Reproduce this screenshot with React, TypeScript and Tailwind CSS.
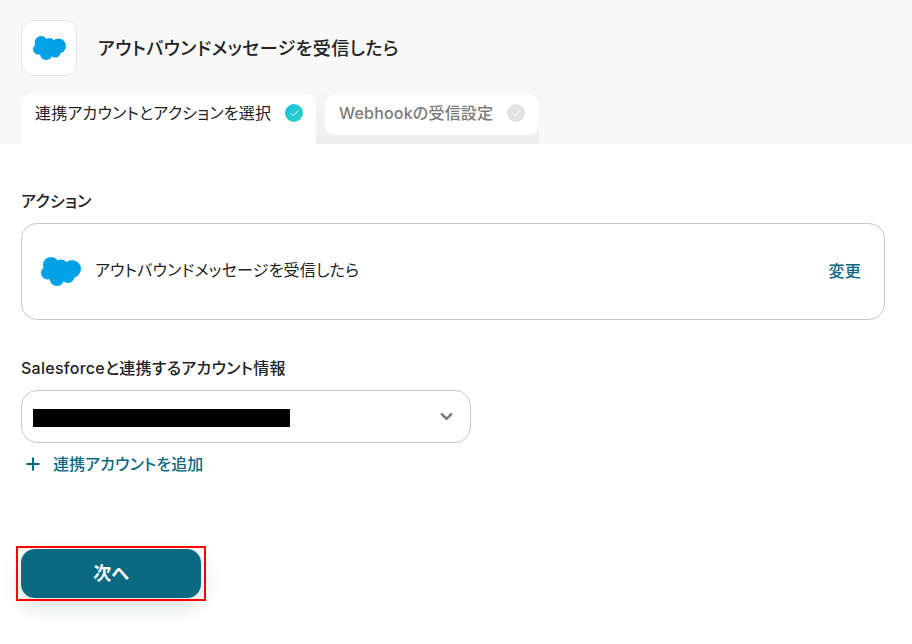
import { ChevronDown, Plus, Check } from "lucide-react";

function CloudLogo({ className }: { className: string }) {
  return (
    <svg viewBox="0 0 40 29" className={className} fill="#00a2e5">
      <circle cx="10" cy="8" r="8" />
      <circle cx="20" cy="9.5" r="7" />
      <circle cx="31" cy="12" r="9" />
      <circle cx="6.5" cy="16" r="6.5" />
      <circle cx="16" cy="21.5" r="7.5" />
      <circle cx="27" cy="19.5" r="6.5" />
      <rect x="6" y="8" width="26" height="14" />
    </svg>
  );
}

export default function App() {
  return (
    <div className="min-h-[644px] w-[912px] overflow-hidden bg-white font-['Inter','Noto_Sans_CJK_JP',sans-serif] text-[#222222] [font-feature-settings:'palt']">
      <div className="h-[144px] overflow-hidden bg-[#f8f8f8] pl-[21px] pt-[20px]">
        <div className="flex items-center gap-[21px]">
          <div className="flex h-[56px] w-[56px] items-center justify-center rounded-[12px] border border-[#e6e6e6] bg-white">
            <CloudLogo className="h-[24px] w-[33px]" />
          </div>
          <h1 className="text-[18px] font-medium tracking-[0.45px]">アウトバウンドメッセージを受信したら</h1>
        </div>
        <div className="mt-[18px] flex items-start">
          <div className="flex h-[50px] w-[295px] items-start gap-[14px] rounded-t-[10px] bg-white pl-[14px] pt-[7px]">
            <span className="whitespace-nowrap text-[16px] font-normal leading-[24px] tracking-[0.2px]">連携アカウントとアクションを選択</span>
            <span className="mt-[3px] flex h-[18px] w-[18px] items-center justify-center rounded-full bg-gradient-to-br from-[#1dbfe0] to-[#2ad1c4]">
              <Check className="h-[11px] w-[11px] text-white" strokeWidth={2} />
            </span>
          </div>
          <div className="h-[50px] w-[223px] bg-gradient-to-b from-[#f6f6f6] to-[#eeeeee] pl-[9px]">
            <div className="flex h-[41px] w-[214px] items-start gap-[14px] rounded-[10px] bg-white pl-[14px] pt-[7px] text-[#7a7a7a]">
              <span className="whitespace-nowrap text-[16px] font-medium leading-[24px] tracking-[0.2px]">Webhookの受信設定</span>
              <span className="mt-[3px] flex h-[18px] w-[18px] items-center justify-center rounded-full bg-[#e2e2e2]">
                <Check className="h-[11px] w-[11px] text-white" strokeWidth={2} />
              </span>
            </div>
          </div>
        </div>
      </div>

      <div className="px-[21px] pt-[46px]">
        <h2 className="text-[16px] font-medium leading-[22px] tracking-[0.25px]">アクション</h2>
        <div className="mt-[11px] flex h-[97px] w-[864px] items-center justify-between rounded-[16px] border border-[#c8c8c8] pl-[19px] pr-[23px]">
          <div className="flex items-center gap-[14px]">
            <CloudLogo className="h-[29px] w-[40px]" />
            <span className="-mt-[3px] text-[16px] leading-[22px] tracking-[0.22px]">アウトバウンドメッセージを受信したら</span>
          </div>
          <span className="-mt-[1px] text-[16px] font-medium tracking-[0.25px] text-[#0b6a82]">変更</span>
        </div>

        <h2 className="mt-[37px] text-[16px] font-medium leading-[22px] tracking-[0.27px]">Salesforceと連携するアカウント情報</h2>
        <div className="mt-[11px] flex h-[53px] w-[450px] items-center justify-between rounded-[16px] border border-[#c8c8c8] pl-[11px] pr-[14px]">
          <div className="mt-[2px] h-[18px] w-[257px] bg-black" />
          <ChevronDown className="h-[19px] w-[19px] text-[#777777]" strokeWidth={3} />
        </div>
        <div className="mt-[10px] flex items-center gap-[10px] pl-[2px] text-[#0b6a82]">
          <Plus className="h-[20px] w-[20px]" strokeWidth={2.5} />
          <span className="text-[16px] font-medium leading-[22px] tracking-[0.1px]">連携アカウントを追加</span>
        </div>

        <div className="relative mt-[74px] w-[180px]">
          <button className="flex h-[49px] w-[180px] items-center justify-center rounded-[14px] bg-[#0b6a82] text-[18px] font-bold text-white shadow-[0_8px_20px_rgba(40,60,80,0.18)]">
            次へ
          </button>
          <div className="absolute -bottom-[3px] -left-[5px] -right-[5px] -top-[3px] border-2 border-[#ff0000]" />
        </div>
      </div>
    </div>
  );
}
